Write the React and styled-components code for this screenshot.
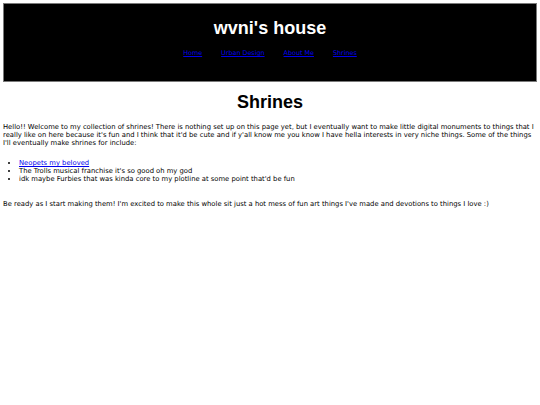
import styled, { createGlobalStyle } from "styled-components";

const GlobalStyle = createGlobalStyle`
  body {
    margin: 3px;
    background: #fff;
    color: #000;
    font-family: "DejaVu Sans", Verdana, sans-serif;
    font-size: 6.8px;
  }
`;

const SHeader = styled.header`
  background-color: #000;
  border: 1px solid #7a7a7a;
  height: 77px;
  display: flex;
  flex-direction: column;
  align-items: center;
`;

const STitle = styled.h1`
  font-family: "Liberation Sans", Arial, sans-serif;
  font-size: 18px;
  font-weight: 700;
  color: #fff;
  margin: 14px 0 0;
`;

const SNav = styled.nav`
  display: flex;
  gap: 19px;
  margin-top: 10px;
  font-size: 6.4px;
  a {
    color: #0000ee;
  }
`;

const SHeading = styled.h1`
  font-family: "Liberation Sans", Arial, sans-serif;
  font-size: 18px;
  font-weight: 700;
  text-align: center;
  margin: 10px 0 10px;
`;

const SText = styled.p`
  margin: 0;
`;

const SList = styled.ul`
  margin: 12px 0 17px;
  padding-left: 16px;
  a {
    color: #0000ee;
  }
`;

const links = ["Home", "Urban Design", "About Me", "Shrines"];

const App = () => {
  return (
    <>
      <GlobalStyle />
      <SHeader>
        <STitle>wvni's house</STitle>
        <SNav>
          {links.map((link) => (
            <a href="#" key={link}>
              {link}
            </a>
          ))}
        </SNav>
      </SHeader>
      <SHeading>Shrines</SHeading>
      <SText>
        Hello!! Welcome to my collection of shrines! There is nothing set up on
        this page yet, but I eventually want to make little digital monuments to
        things that I really like on here because it's fun and I think that it'd
        be cute and if y'all know me you know I have hella interests in very
        niche things. Some of the things I'll eventually make shrines for
        include:
      </SText>
      <SList>
        <li>
          <a href="#">Neopets my beloved</a>
        </li>
        <li>The Trolls musical franchise it's so good oh my god</li>
        <li>
          idk maybe Furbies that was kinda core to my plotline at some point
          that'd be fun
        </li>
      </SList>
      <SText>
        Be ready as I start making them! I'm excited to make this whole sit just
        a hot mess of fun art things I've made and devotions to things I love :)
      </SText>
    </>
  );
};

export default App;
